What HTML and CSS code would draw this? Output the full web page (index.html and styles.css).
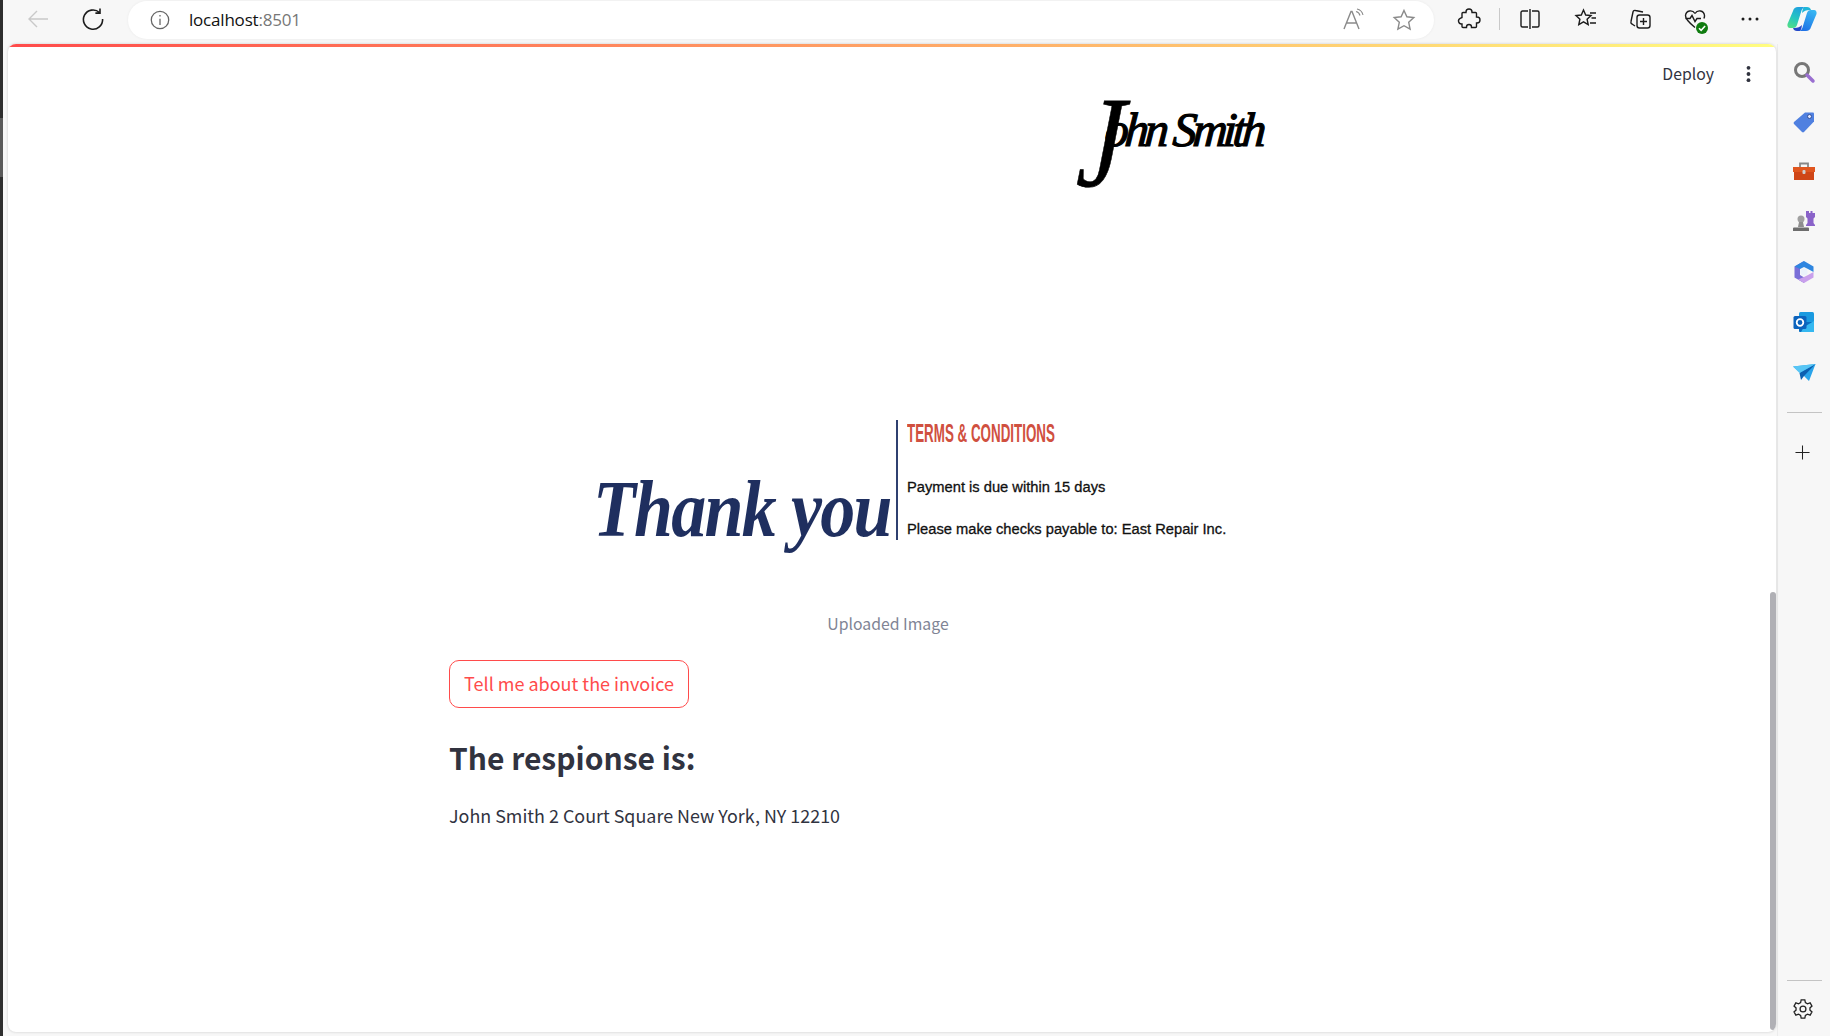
FILE: index.html
```html
<!DOCTYPE html>
<html lang="en">
<head>
<meta charset="utf-8">
<title>localhost:8501</title>
<link rel="stylesheet" href="styles.css">
</head>
<body>
<div class="window">
  <header class="toolbar">
    <div class="nav">
      <svg class="ico back" viewBox="0 0 24 24"><path d="M22 12H3M11 4l-8 8 8 8"/></svg>
      <svg class="ico reload" viewBox="0 0 24 24"><path d="M18.500 5.500A9.600 9.600 0 1 0 21.600 12M19 1.500v4.600h-4.600"/></svg>
    </div>
    <div class="address">
      <svg class="ico info" viewBox="0 0 24 24"><circle cx="12" cy="12" r="9.500"/><path d="M12 10.500v7M12 6.500v1.600"/></svg>
      <span class="url">localhost<span class="port">:8501</span></span>
      <span class="spacer"></span>
      <svg class="ico grey" viewBox="0 0 24 24"><path d="M2 21 9 3.500h1L17 21M4.500 15h10"/><path d="M14 3.500c2 .5 3.500 2 4 4M15 1c3 .6 5.300 2.900 6 6" class="thin"/></svg>
      <svg class="ico grey star" viewBox="0 0 24 24"><path d="m12 2.500 2.900 6.300 6.900.8-5.100 4.700 1.400 6.800-6.100-3.400-6.100 3.400 1.400-6.800-5.100-4.700 6.900-.8z"/></svg>
    </div>
    <div class="tools">
      <svg class="ico" viewBox="0 0 24 24"><path d="M9 5.500V5a3 3 0 0 1 6 0v.5h3.500a1 1 0 0 1 1 1V10h.5a3 3 0 0 1 0 6h-.5v3.500a1 1 0 0 1-1 1H14.500V20a2.500 2.500 0 0 0-5 0v.5H6a1 1 0 0 1-1-1V17h-.5a3 3 0 0 1-1.300-5.700L5 10.500V6.500a1 1 0 0 1 1-1z"/></svg>
      <span class="tool-sep"></span>
      <svg class="ico" viewBox="0 0 24 24"><path d="M10 4H4.500A1.500 1.500 0 0 0 3 5.500v13A1.500 1.500 0 0 0 4.500 20H10M14 4h5.500A1.500 1.500 0 0 1 21 5.500v13a1.500 1.500 0 0 1-1.500 1.500H14M12 2v20"/></svg>
      <svg class="ico" viewBox="0 0 24 24"><path d="m9.500 3 2.200 5 5.300.6-3.900 3.600 1.100 5.300-4.700-2.700-4.700 2.700 1.100-5.300L2 8.600 7.300 8zM16 6h6M17.500 11H22M16 16h6"/></svg>
      <svg class="ico" viewBox="0 0 24 24"><path d="M7 19 4 17a2 2 0 0 1-1-2.500L5 5a2 2 0 0 1 2.500-1.500L15 5"/><rect x="9" y="8" width="13" height="13" rx="2.500"/><path d="M15.500 11v7M12 14.500h7"/></svg>
      <span class="health">
        <svg class="ico" viewBox="0 0 24 24"><path d="M12 6.500C9.500 2.500 3 3 2.500 8.500c-.3 3.500 4 7.500 9.500 12M12 6.500c2.500-4 9-3.500 9.500 2 .1 1-.1 2-.6 3"/><path d="M2.500 11.500h4.500l2-3 3 6 2-3h4"/></svg>
        <span class="health-badge"><svg viewBox="0 0 10 10"><path d="m2.500 5.200 1.800 1.800 3.300-3.600"/></svg></span>
      </span>
      <svg class="ico dots" viewBox="0 0 24 24"><circle cx="5" cy="12" r="1.500"/><circle cx="12" cy="12" r="1.500"/><circle cx="19" cy="12" r="1.500"/></svg>
      <svg class="copilot" viewBox="0 0 30 26">
        <defs>
          <linearGradient id="cpa" x1="0.700" y1="0" x2="0.300" y2="1"><stop offset="0" stop-color="#1f9fe0"/><stop offset=".55" stop-color="#25c6c0"/><stop offset="1" stop-color="#4fdc8a"/></linearGradient>
          <linearGradient id="cpb" x1="0.700" y1="0" x2="0.300" y2="1"><stop offset="0" stop-color="#38b6f2"/><stop offset="1" stop-color="#1f72e6"/></linearGradient>
        </defs>
        <path fill="#1fb6d8" d="M17 1h3c2 0 3.500 1 4 3h-1c-4 0-6 1-8 3 .4-2.500 .6-4.500 2-6z"/>
        <path fill="#2448c8" d="M13 25h-3c-2 0-3.500-1-4-3h1c4 0 6-1 8-3-.4 2.500-.6 4.500-2 6z"/>
        <path fill="url(#cpa)" d="M11 1h7c-2 .5-3 2-3.500 3.500L10 19c-.6 2-2 3-4 3H3c-2 0-3-2-2.500-4L6 5c.6-2.500 2.500-4 5-4z"/>
        <path fill="url(#cpb)" d="M19 25h-7c2-.5 3-2 3.500-3.500L20 7c.6-2 2-3 4-3h3c2 0 3 2 2.500 4L24 21c-.6 2.500-2.500 4-5 4z"/>
      </svg>
    </div>
  </header>

  <div class="content">
    <span class="edge"></span>
    <main class="page">
      <div class="deco"></div>
      <div class="app-header">
        <span class="deploy">Deploy</span>
        <svg class="kebab" viewBox="0 0 4 16"><circle cx="2" cy="2.500" r="1.700"/><circle cx="2" cy="8" r="1.700"/><circle cx="2" cy="13.500" r="1.700"/></svg>
      </div>
      <div class="column">
        <figure class="invoice">
          <div class="signature"><span class="sig-j">J</span><span class="sig-rest">ohn Smith</span></div>
          <div class="footer-art">
            <div class="thanks"><span>Thank you</span></div>
            <div class="terms">
              <div class="terms-title"><span>TERMS &amp; CONDITIONS</span></div>
              <p class="terms-line first">Payment is due within 15 days</p>
              <p class="terms-line">Please make checks payable to: East Repair Inc.</p>
            </div>
          </div>
          <figcaption class="caption">Uploaded Image</figcaption>
        </figure>
        <button class="action">Tell me about the invoice</button>
        <h2 class="response-title">The respionse is:</h2>
        <p class="response">John Smith 2 Court Square New York, NY 12210</p>
      </div>
      <span class="scrollbar"></span>
    </main>
    <aside class="sidebar">
      <svg class="side-ico" viewBox="0 0 24 24"><circle cx="10" cy="10" r="6.500" fill="none" stroke="#777" stroke-width="3"/><path d="m15 15 6 6" stroke="#9a6fd0" stroke-width="3.500" stroke-linecap="round"/></svg>
      <svg class="side-ico" viewBox="0 0 24 24"><path fill="#4f80e0" d="M13 2.500h8a1 1 0 0 1 1 1v8L12 22a1.500 1.500 0 0 1-2 0l-8-8a1.500 1.500 0 0 1 0-2z"/><circle cx="17.500" cy="6.500" r="2" fill="#dfe6ff" stroke="#33509a"/></svg>
      <svg class="side-ico" viewBox="0 0 24 24"><path d="M8 7V3.500h8V7" fill="none" stroke="#888" stroke-width="1.800"/><path fill="#e0561f" d="M1 7h22v5H1z"/><path fill="#cf4617" d="M2 12h20v8H2z"/><rect x="10.500" y="10" width="3" height="4" rx="1" fill="#cfcfcf"/></svg>
      <svg class="side-ico" viewBox="0 0 24 24"><circle cx="9" cy="9" r="3.500" fill="#a0a0a0"/><path fill="#8e8e8e" d="M7 12h4l1 5H6z"/><path fill="#6d6d6d" d="M2 17.500h14a1 1 0 0 1 1 1V21H1v-2.500a1 1 0 0 1 1-1z"/><path fill="#8a63c9" d="M15 1h2v2h1.500V1h2v2H23V1v6l-1.500 1.500V13l1.500 2v1h-9v-1l1.500-2V8.500L14 7V1z"/></svg>
      <svg class="side-ico" viewBox="0 0 24 24">
        <path fill="#7a6fd8" d="M12 1 2.500 6.500v11L12 23l1-5-5-3V9z"/>
        <path fill="#2f86e0" d="M12 1l9.500 5.500V12L16 9l-4-2-4 2-5.500-2.500z"/>
        <path fill="#c9a0ec" d="M21.500 12v5.500L12 23l-6-3.500L12 17l4-2z"/>
        <circle cx="12" cy="12" r="3.600" fill="#eaf2fb"/>
      </svg>
      <svg class="side-ico" viewBox="0 0 24 24"><rect x="7" y="2" width="15" height="20" rx="1.500" fill="#1a9ae0"/><path fill="#0a6cc0" d="M7 12h15v10H8.500A1.500 1.500 0 0 1 7 20.500z"/><path fill="#35b8f0" d="m12 17 10-6v11H9z"/><rect x="1.500" y="6" width="13" height="13" rx="1.500" fill="#0b63bd"/><circle cx="8" cy="12.500" r="3.300" fill="none" stroke="#fff" stroke-width="1.800"/></svg>
      <svg class="side-ico" viewBox="0 0 24 24"><path fill="#2aa4ea" d="M1 6.500 23.500 4 17 21 12 16z"/><path fill="#0d5fb0" d="m7.500 13 16-9L12 16l-3 4z"/><path fill="#58c6f5" d="M1 6.500 23.500 4 7.500 13z"/></svg>
      <span class="side-sep"></span>
      <svg class="side-plus" viewBox="0 0 16 16"><path d="M8 .5v15M.5 8h15"/></svg>
      <span class="spacer"></span>
      <span class="side-sep low"></span>
      <svg class="side-gear" viewBox="0 0 24 24"><circle cx="12" cy="12" r="3.200"/><path d="M10 2h4l.6 3 2.300 1.300 2.900-1 2 3.500-2.300 2a7 7 0 0 1 0 2.400l2.300 2-2 3.500-2.900-1L14.600 19l-.6 3h-4l-.6-3-2.300-1.300-2.900 1-2-3.500 2.300-2a7 7 0 0 1 0-2.400l-2.300-2 2-3.500 2.900 1L9.400 5z"/></svg>
    </aside>
  </div>
</div>
</body>
</html>
```
FILE: styles.css
```css
* { box-sizing: border-box; }
html, body { margin: 0; height: 100%; overflow: hidden; }
body { background: #f7f7f7; }
.window { position: relative; width: 1830px; height: 1036px; display: flex; flex-direction: column; }
.window::before { content: ""; position: absolute; left: 0; top: 0; bottom: 0; width: 3px; background: linear-gradient(#2e2e2e 0 118px, #5a5a5a 118px 177px, #2e2e2e 177px); }

.toolbar { height: 44px; display: flex; align-items: flex-start; background: #f7f7f7; flex: none; }
.nav { width: 128px; height: 38px; display: flex; align-items: center; }
.ico { width: 24px; height: 24px; fill: none; stroke: #1c1c1c; stroke-width: 1.400; flex: none; }
.back { margin-left: 26px; stroke: #c9c9c9; }
.reload { margin-left: 31px; stroke-width: 1.600; }
.address { width: 1306px; height: 38px; margin-top: 1px; background: #fff; border-radius: 19px; display: flex; align-items: center; padding: 0 18px 0 21px; box-shadow: 0 0 3px rgba(0,0,0,.06); }
.info { stroke: #666; width: 22px; height: 22px; }
.url { margin-left: 18px; font: 17px/22px "Open Sans", "Noto Sans", sans-serif; letter-spacing: -.2px; color: #111; }
.port { color: #777; }
.spacer { flex: 1; }
.grey { stroke: #8a8a8a; }
.grey .thin { stroke-width: 1.100; }
.star { margin-left: 26px; }
.tools { flex: 1; height: 38px; display: flex; align-items: center; padding-left: 23px; }
.tool-sep { width: 1px; height: 22px; background: #c9c9c9; margin: 0 18px 0 18px; }
.tools > svg:nth-of-type(3) { margin-left: 32px; }
.tools > svg:nth-of-type(4) { margin-left: 30px; }
.health { position: relative; width: 24px; height: 24px; margin-left: 31px; flex: none; }
.health .ico { display: block; }
.health-badge { position: absolute; right: -1px; bottom: -3px; width: 12px; height: 12px; background: #107c10; border-radius: 50%; display: flex; }
.health-badge svg { width: 12px; height: 12px; fill: none; stroke: #fff; stroke-width: 1.300; }
.dots { margin-left: 31px; fill: #1c1c1c; stroke: none; }
.copilot { width: 30px; height: 26px; margin-left: 25px; flex: none; }

.content { flex: 1; display: flex; min-height: 0; }
.edge { width: 8px; flex: none; }
.page { width: 1768px; height: 988px; position: relative; background: #fff; border-radius: 8px; overflow: hidden; box-shadow: 0 0 3px rgba(0,0,0,.18); flex: none; }
.deco { height: 3px; background: linear-gradient(90deg, #ff4b4b, #fffd80); }
.app-header { height: 42px; padding: 11px 25px 0 0; display: flex; align-items: center; justify-content: flex-end; font-family: "Noto Sans CJK SC", "Source Sans 3", sans-serif; }
.deploy { font-size: 15.800px; line-height: 24px; color: #31333f; margin-right: 32px; }
.kebab { width: 5px; height: 18px; fill: #31333f; }

.column { width: 878px; margin-left: 441px; font-family: "Noto Sans CJK SC", "Source Sans 3", sans-serif; color: #31333f; }
.invoice { margin: 0; }
.signature { display: flex; align-items: flex-start; height: 90px; margin: -2px 0 0 632px; font: italic 400 48px/90px "Liberation Serif", serif; color: #000; white-space: nowrap; }
.sig-j { font-size: 130px; line-height: 110px; height: 90px; margin-right: -4px; transform: scaleX(.8) skewX(-4deg); transform-origin: left top; -webkit-text-stroke: .6px #000; }
.sig-rest { margin-left: -30px; letter-spacing: -4px; transform: skewX(-4deg); margin-top: -2px; -webkit-text-stroke: 1.200px #000; }
.footer-art { display: flex; margin: 243px 0 0 144px; height: 190px; }
.thanks { width: 303px; margin-top: 45px; font: italic 700 70px/90px "Liberation Serif", serif; color: #1f2f5f; letter-spacing: -1.700px; white-space: nowrap; }
.thanks span { display: inline-block; transform: scaleY(1.15); }
.terms { height: 120px; border-left: 2px solid #2f4070; padding-left: 9px; font-family: "Liberation Sans", Arial, sans-serif; color: #111; }
.terms-title { height: 24px; margin-top: 1px; color: #d0503f; font-size: 25px; line-height: 24px; font-weight: 700; white-space: nowrap; }
.terms-title span { display: inline-block; transform: scaleX(.535); transform-origin: left center; }
.terms-line { margin: 0; font-size: 14.700px; line-height: 20px; white-space: nowrap; -webkit-text-stroke: .3px #111; }
.terms-line.first { margin-top: 32px; }
.terms-line + .terms-line { margin-top: 22px; }
.caption { text-align: center; font-size: 15.800px; line-height: 28px; color: #808495; }
.action { display: block; width: 240px; height: 48px; margin-top: 22px; padding: 0 0 2px; background: #fff; border: 1px solid #ff4b4b; border-radius: 10px; color: #ff4b4b; font: 400 18px/28px "Noto Sans CJK SC", "Source Sans 3", sans-serif; }
.response-title { margin: 27px 0 0; font-size: 30px; line-height: 44px; font-weight: 600; color: #31333f; }
.response { margin: 22px 0 0; font-size: 17.900px; line-height: 28px; color: #31333f; }
.scrollbar { position: absolute; right: 0; top: 548px; width: 6px; height: 438px; background: #b0b0b5; border-radius: 3px; }

.sidebar { flex: 1; display: flex; flex-direction: column; align-items: center; padding: 16px 0 16px; border-left: 1px solid #ececec; margin-left: 1px; }
.side-ico { width: 24px; height: 24px; flex: none; margin-bottom: 26px; }
.side-sep { width: 35px; height: 1px; background: #c4c4c4; flex: none; margin-top: 1.500px; }
.side-plus { width: 15px; height: 15px; fill: none; stroke: #222; stroke-width: 1.100; margin-top: 32px; flex: none; margin-right: 3px; }
.side-sep.low { margin-bottom: 17px; }
.side-gear { width: 22px; height: 22px; fill: none; stroke: #222; stroke-width: 1.400; flex: none; margin-right: 2px; }
```
